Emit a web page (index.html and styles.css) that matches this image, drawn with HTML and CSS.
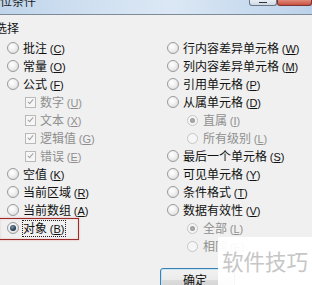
FILE: index.html
```html
<!DOCTYPE html>
<html lang="zh-CN">
<head>
<meta charset="utf-8">
<link rel="stylesheet" href="styles.css">
</head>
<body>
<div class="titlebar">
  <span class="title">定位条件</span>
  <div class="caption-btns"><span class="cbtn max"><i></i></span><span class="cbtn close"></span></div>
</div>
<div class="client">
  <div class="legend">选择</div>
  <div class="cols">
    <div class="col">
      <div class="row"><span class="radio"></span><span class="lbl">批注 <span class="ak">(<u>C</u>)</span></span></div>
      <div class="row"><span class="radio"></span><span class="lbl">常量 <span class="ak">(<u>O</u>)</span></span></div>
      <div class="row"><span class="radio"></span><span class="lbl">公式 <span class="ak">(<u>F</u>)</span></span></div>
      <div class="row sub"><span class="chk"></span><span class="lbl dis">数字 <span class="ak">(<u>U</u>)</span></span></div>
      <div class="row sub"><span class="chk"></span><span class="lbl dis">文本 <span class="ak">(<u>X</u>)</span></span></div>
      <div class="row sub"><span class="chk"></span><span class="lbl dis">逻辑值 <span class="ak">(<u>G</u>)</span></span></div>
      <div class="row sub"><span class="chk"></span><span class="lbl dis">错误 <span class="ak">(<u>E</u>)</span></span></div>
      <div class="row"><span class="radio"></span><span class="lbl">空值 <span class="ak">(<u>K</u>)</span></span></div>
      <div class="row"><span class="radio"></span><span class="lbl">当前区域 <span class="ak">(<u>R</u>)</span></span></div>
      <div class="row"><span class="radio"></span><span class="lbl">当前数组 <span class="ak">(<u>A</u>)</span></span></div>
      <div class="row marked"><span class="radio on"></span><span class="lbl focus">对象 <span class="ak">(<u>B</u>)</span></span></div>
    </div>
    <div class="col">
      <div class="row"><span class="radio"></span><span class="lbl">行内容差异单元格 <span class="ak">(<u>W</u>)</span></span></div>
      <div class="row"><span class="radio"></span><span class="lbl">列内容差异单元格 <span class="ak">(<u>M</u>)</span></span></div>
      <div class="row"><span class="radio"></span><span class="lbl">引用单元格 <span class="ak">(<u>P</u>)</span></span></div>
      <div class="row"><span class="radio"></span><span class="lbl">从属单元格 <span class="ak">(<u>D</u>)</span></span></div>
      <div class="row subr"><span class="radio dis on"></span><span class="lbl dis">直属 <span class="ak">(<u>I</u>)</span></span></div>
      <div class="row subr"><span class="radio dis"></span><span class="lbl dis">所有级别 <span class="ak">(<u>L</u>)</span></span></div>
      <div class="row"><span class="radio"></span><span class="lbl">最后一个单元格 <span class="ak">(<u>S</u>)</span></span></div>
      <div class="row"><span class="radio"></span><span class="lbl">可见单元格 <span class="ak">(<u>Y</u>)</span></span></div>
      <div class="row"><span class="radio"></span><span class="lbl">条件格式 <span class="ak">(<u>T</u>)</span></span></div>
      <div class="row"><span class="radio"></span><span class="lbl">数据有效性 <span class="ak">(<u>V</u>)</span></span></div>
      <div class="row subr"><span class="radio dis on"></span><span class="lbl dis">全部 <span class="ak">(<u>L</u>)</span></span></div>
      <div class="row subr"><span class="radio dis"></span><span class="lbl dis">相同 <span class="ak">(<u>E</u>)</span></span></div>
    </div>
  </div>
  <div class="btnrow"><button class="ok">确定</button></div>
</div>
<div class="watermark">软件技巧</div>
</body>
</html>
```
FILE: styles.css
```css
html, body {
  margin: 0;
  padding: 0;
}
body {
  width: 312px;
  height: 285px;
  overflow: hidden;
  position: relative;
  background: #f0f0f0;
  font-family: "Noto Sans CJK SC", "Noto Sans", sans-serif;
  font-size: 12px;
  color: #111;
}
.titlebar {
  height: 14px;
  border-bottom: 1px solid #7d8a98;
  background: linear-gradient(90deg, #c0d5eb 0%, #d3e2f2 35%, #dbe7f4 55%, #c9dbef 80%, #bcd2ea 100%);
  display: flex;
  justify-content: space-between;
  overflow: hidden;
}
.title {
  margin-left: -12px;
  margin-top: -6px;
  font-size: 12px;
  line-height: 14px;
  color: #1a1a1a;
}
.caption-btns {
  display: flex;
  align-items: flex-start;
}
.cbtn {
  display: block;
  height: 5px;
  border: 1px solid #6a7684;
  border-top: none;
  border-radius: 0 0 3px 3px;
}
.cbtn.max {
  width: 26px;
  background: linear-gradient(#e6edf5, #cfd9e4);
  display: flex;
  justify-content: center;
}
.cbtn.max i {
  display: block;
  width: 8px;
  height: 2px;
  border-bottom: 1px solid #333;
}
.cbtn.close {
  width: 33px;
  border-color: #7a3434;
  background: linear-gradient(#e08a7c, #c8503f);
}
.client {
  padding-top: 5px;
}
.legend {
  margin-left: -5px;
  line-height: 16px;
  height: 16px;
  margin-bottom: 3px;
}
.cols {
  display: grid;
  grid-template-columns: 160px 1fr;
}
.col {
  padding-left: 7px;
}
.row {
  height: 18px;
  display: flex;
  align-items: center;
  gap: 4px;
  white-space: nowrap;
}
.row.sub {
  padding-left: 18px;
}
.row.subr {
  padding-left: 20px;
  gap: 5px;
}
.lbl {
  line-height: 14px;
}
.lbl.dis {
  color: #8f8f8f;
}
.ak {
  font-size: 11px;
  font-family: "Liberation Sans", sans-serif;
}
.ak u {
  text-underline-offset: 1px;
}
.radio {
  flex: none;
  box-sizing: border-box;
  width: 12px;
  height: 12px;
  border-radius: 50%;
  border: 1px solid #9a9a9a;
  background: radial-gradient(circle at 40% 35%, #ffffff 0%, #f0f0f0 45%, #d2d2d2 100%);
  display: flex;
  align-items: center;
  justify-content: center;
}
.radio.on::after {
  content: "";
  width: 6px;
  height: 6px;
  border-radius: 50%;
  background: radial-gradient(circle at 40% 35%, #7e95ab 0%, #2a3e52 60%, #152433 100%);
}
.radio.dis {
  width: 11px;
  height: 11px;
  border-color: #c6c6c6;
  background: #f6f6f6;
}
.radio.dis.on::after {
  width: 5px;
  height: 5px;
  background: radial-gradient(circle, #b0b0b0, #8e8e8e);
}
.chk {
  flex: none;
  box-sizing: border-box;
  width: 11px;
  height: 11px;
  border: 1px solid #b9b9b9;
  background: #f6f6f6;
  display: flex;
  align-items: center;
  justify-content: center;
}
.chk::after {
  content: "";
  width: 2px;
  height: 5px;
  margin-top: -2px;
  border-right: 1.5px solid #a2a2a2;
  border-bottom: 1.5px solid #a2a2a2;
  transform: rotate(40deg);
}
.row.marked {
  position: relative;
}
.row.marked::before {
  content: "";
  position: absolute;
  left: -8px;
  top: -1px;
  width: 80px;
  height: 22px;
  box-sizing: border-box;
  border: 1px solid #9a2b2b;
  box-shadow: 0 0 2px rgba(220, 90, 90, 0.45), inset 0 0 2px rgba(220, 90, 90, 0.35);
}
.lbl.focus {
  outline: 1px dotted #222;
  outline-offset: 0;
  padding: 0 1px 0 0;
}
.btnrow {
  margin-top: 13px;
  padding-left: 160px;
}
.ok {
  display: block;
  width: 75px;
  height: 23px;
  box-sizing: border-box;
  border: 1px solid #3c7fb1;
  border-radius: 3px;
  background: linear-gradient(#f2f2f2 0%, #ebebeb 50%, #dddddd 51%, #cfcfcf 100%);
  box-shadow: inset 0 0 0 1px #c4e5f6;
  font-family: "Noto Sans CJK SC", sans-serif;
  font-size: 12px;
  color: #111;
  padding: 0 0 0 0;
  text-align: left;
  padding-left: 22px;
}
.watermark {
  position: absolute;
  right: 0;
  bottom: 0;
  width: 94px;
  height: 48px;
  background: rgba(255, 255, 255, 0.95);
  color: #c6c6c6;
  font-size: 21.5px;
  line-height: 48px;
  padding-left: 4px;
  box-sizing: border-box;
  white-space: nowrap;
  overflow: hidden;
}
```
